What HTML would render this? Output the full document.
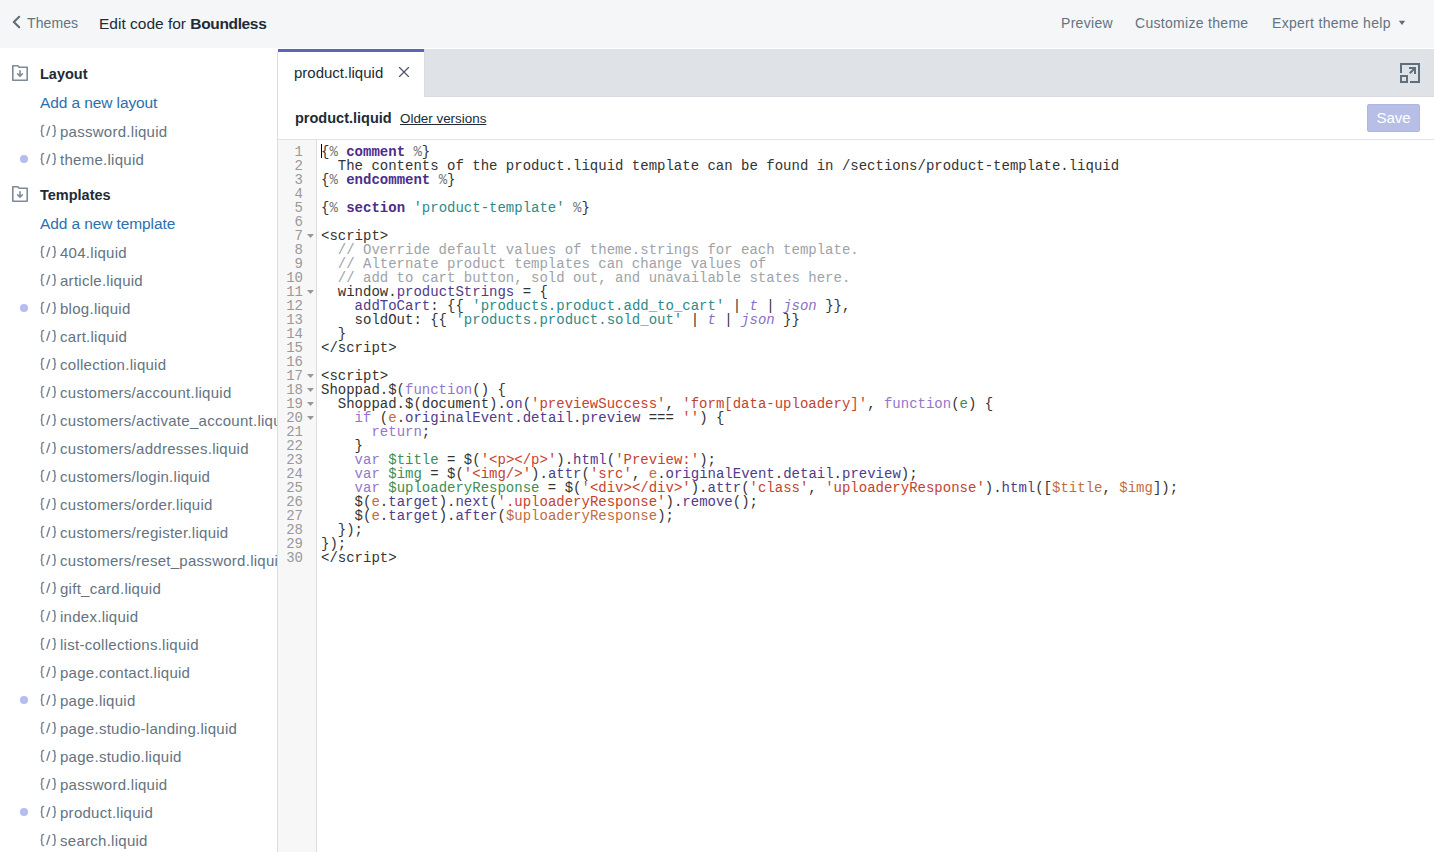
<!DOCTYPE html>
<html><head><meta charset="utf-8"><style>
*{box-sizing:border-box;margin:0;padding:0}
html,body{width:1434px;height:852px;overflow:hidden;background:#fff;font-family:"Liberation Sans",sans-serif;}
.a{position:absolute;white-space:nowrap}
#hdr{position:absolute;left:0;top:0;width:1434px;height:48px;background:#f4f6f8;}
#hdr .t{top:15px;line-height:18px;font-size:15px}
#side{position:absolute;left:0;top:48px;width:277px;height:804px;background:#fff;overflow:hidden}
.row{font-size:15px;line-height:18px}
.h{color:#212b36;font-weight:bold;left:40px;font-size:14.5px}
.lnk{color:#2b70ad;left:40px;letter-spacing:-0.1px;font-size:15.5px}
.f{left:40px;color:#637381;letter-spacing:0.27px}
.br{display:inline-block;width:21px}
.dot{position:absolute;left:20px;width:8px;height:8px;border-radius:50%;background:#b4bcf0}
#main{position:absolute;left:277px;top:48px;width:1157px;height:804px;border-left:1px solid #fff;}
#vb{position:absolute;left:277px;top:52px;width:1px;height:800px;background:#dcdcdc}
#tabs{position:absolute;left:0;top:1px;width:1156px;height:48px;background:#dfe3e8;box-shadow:inset 0 -1px 0 #d8dce1}
#tab{position:absolute;left:0;top:0;width:146px;height:48px;background:#fff;border-top:3px solid #5866b8;box-shadow:1px 0 0 #d8dce1}
#bar{position:absolute;left:0;top:49px;width:1156px;height:43px;background:#fff;border-bottom:1px solid #dfe3e8}
#save{position:absolute;left:1089px;top:7px;width:53px;height:28px;border-radius:3px;background:#b8bfe6;box-shadow:inset 0 0 0 1px #aeb6e2;color:#fff;font-size:15px;line-height:28px;text-align:center}
#gut{position:absolute;left:0;top:92px;width:39px;height:712px;background:#f7f7f7;border-right:1px solid #ddd}
.mono{font-family:"Liberation Mono",monospace;font-size:14px;line-height:14px;white-space:pre}
#code{position:absolute;left:43px;top:97px;color:#333}
#nums{position:absolute;left:0;top:5px;width:25px;text-align:right;color:#999}
.k{color:#4b2d8a;font-weight:bold}.p{color:#777}.s{color:#2e8a8a}.c{color:#9ea3a8}
.pr{color:#503a8a}.kw{color:#9575cd}.v{color:#3e8e50}.st{color:#c4432f}.o{color:#bf6d3d}.it{color:#8a6fc8;font-style:italic}
</style></head><body>
<div id="hdr">
<svg class="a" style="left:12px;top:15px" width="10" height="14" viewBox="0 0 10 14"><polyline points="7.2,1.8 1.8,7 7.2,12.2" fill="none" stroke="#5f6d7b" stroke-width="2.1" stroke-linecap="round" stroke-linejoin="round"/></svg>
<div class="a t" style="left:27px;top:14px;font-size:14px;color:#637381;letter-spacing:0.1px">Themes</div>
<div class="a t" style="left:99px;top:15px;font-size:15.5px;color:#212b36;">Edit code for <b style="letter-spacing:-0.35px">Boundless</b></div>
<div class="a t" style="left:1061px;top:14px;font-size:14px;color:#637381;letter-spacing:0.3px">Preview</div>
<div class="a t" style="left:1135px;top:14px;font-size:14px;color:#637381;letter-spacing:0.3px">Customize theme</div>
<div class="a t" style="left:1272px;top:14px;font-size:14px;color:#637381;letter-spacing:0.3px">Expert theme help</div>
<svg class="a" style="left:1398px;top:20px" width="8" height="6" viewBox="0 0 8 6"><polygon points="0.8,0.8 7.2,0.8 4,5" fill="#5f6d7b"/></svg>
</div>
<div id="side"><div class="a row h" style="top:17px">Layout</div><svg class="a" style="left:12px;top:17px" width="16" height="16" viewBox="0 0 16 16"><path d="M0.8 0.8H5.9L7.1 2.2H15.2V15.2H0.8Z" fill="none" stroke="#7d8a97" stroke-width="1.6" stroke-linejoin="round"/><path d="M8 5.8V11.2M5.6 8.8L8 11.3L10.4 8.8" fill="none" stroke="#7d8a97" stroke-width="1.6" stroke-linecap="round" stroke-linejoin="round"/></svg><div class="a row lnk" style="top:46px">Add a new layout</div><div class="a row f" style="top:75px;left:60px">password.liquid</div><svg class="a" style="left:40px;top:76px" width="17" height="14" viewBox="0 0 17 14"><path d="M3.6 1.5C2.3 1.5 1.8 2.1 1.8 3.2V5.7C1.8 6.5 1.4 6.9 0.7 7C1.4 7.1 1.8 7.5 1.8 8.3V10.8C1.8 11.9 2.3 12.5 3.6 12.5" fill="none" stroke="#7a8794" stroke-width="1.45" stroke-linecap="round"/><path d="M13 1.5C14.3 1.5 14.8 2.1 14.8 3.2V5.7C14.8 6.5 15.2 6.9 15.9 7C15.2 7.1 14.8 7.5 14.8 8.3V10.8C14.8 11.9 14.3 12.5 13 12.5" fill="none" stroke="#7a8794" stroke-width="1.45" stroke-linecap="round"/><path d="M9.6 2.7L6.9 11.2" fill="none" stroke="#7a8794" stroke-width="1.45" stroke-linecap="round"/></svg><div class="a row f" style="top:103px;left:60px">theme.liquid</div><svg class="a" style="left:40px;top:104px" width="17" height="14" viewBox="0 0 17 14"><path d="M3.6 1.5C2.3 1.5 1.8 2.1 1.8 3.2V5.7C1.8 6.5 1.4 6.9 0.7 7C1.4 7.1 1.8 7.5 1.8 8.3V10.8C1.8 11.9 2.3 12.5 3.6 12.5" fill="none" stroke="#7a8794" stroke-width="1.45" stroke-linecap="round"/><path d="M13 1.5C14.3 1.5 14.8 2.1 14.8 3.2V5.7C14.8 6.5 15.2 6.9 15.9 7C15.2 7.1 14.8 7.5 14.8 8.3V10.8C14.8 11.9 14.3 12.5 13 12.5" fill="none" stroke="#7a8794" stroke-width="1.45" stroke-linecap="round"/><path d="M9.6 2.7L6.9 11.2" fill="none" stroke="#7a8794" stroke-width="1.45" stroke-linecap="round"/></svg><div class="dot" style="top:107px"></div><div class="a row h" style="top:138px">Templates</div><svg class="a" style="left:12px;top:138px" width="16" height="16" viewBox="0 0 16 16"><path d="M0.8 0.8H5.9L7.1 2.2H15.2V15.2H0.8Z" fill="none" stroke="#7d8a97" stroke-width="1.6" stroke-linejoin="round"/><path d="M8 5.8V11.2M5.6 8.8L8 11.3L10.4 8.8" fill="none" stroke="#7d8a97" stroke-width="1.6" stroke-linecap="round" stroke-linejoin="round"/></svg><div class="a row lnk" style="top:167px">Add a new template</div><div class="a row f" style="top:196px;left:60px">404.liquid</div><svg class="a" style="left:40px;top:197px" width="17" height="14" viewBox="0 0 17 14"><path d="M3.6 1.5C2.3 1.5 1.8 2.1 1.8 3.2V5.7C1.8 6.5 1.4 6.9 0.7 7C1.4 7.1 1.8 7.5 1.8 8.3V10.8C1.8 11.9 2.3 12.5 3.6 12.5" fill="none" stroke="#7a8794" stroke-width="1.45" stroke-linecap="round"/><path d="M13 1.5C14.3 1.5 14.8 2.1 14.8 3.2V5.7C14.8 6.5 15.2 6.9 15.9 7C15.2 7.1 14.8 7.5 14.8 8.3V10.8C14.8 11.9 14.3 12.5 13 12.5" fill="none" stroke="#7a8794" stroke-width="1.45" stroke-linecap="round"/><path d="M9.6 2.7L6.9 11.2" fill="none" stroke="#7a8794" stroke-width="1.45" stroke-linecap="round"/></svg><div class="a row f" style="top:224px;left:60px">article.liquid</div><svg class="a" style="left:40px;top:225px" width="17" height="14" viewBox="0 0 17 14"><path d="M3.6 1.5C2.3 1.5 1.8 2.1 1.8 3.2V5.7C1.8 6.5 1.4 6.9 0.7 7C1.4 7.1 1.8 7.5 1.8 8.3V10.8C1.8 11.9 2.3 12.5 3.6 12.5" fill="none" stroke="#7a8794" stroke-width="1.45" stroke-linecap="round"/><path d="M13 1.5C14.3 1.5 14.8 2.1 14.8 3.2V5.7C14.8 6.5 15.2 6.9 15.9 7C15.2 7.1 14.8 7.5 14.8 8.3V10.8C14.8 11.9 14.3 12.5 13 12.5" fill="none" stroke="#7a8794" stroke-width="1.45" stroke-linecap="round"/><path d="M9.6 2.7L6.9 11.2" fill="none" stroke="#7a8794" stroke-width="1.45" stroke-linecap="round"/></svg><div class="a row f" style="top:252px;left:60px">blog.liquid</div><svg class="a" style="left:40px;top:253px" width="17" height="14" viewBox="0 0 17 14"><path d="M3.6 1.5C2.3 1.5 1.8 2.1 1.8 3.2V5.7C1.8 6.5 1.4 6.9 0.7 7C1.4 7.1 1.8 7.5 1.8 8.3V10.8C1.8 11.9 2.3 12.5 3.6 12.5" fill="none" stroke="#7a8794" stroke-width="1.45" stroke-linecap="round"/><path d="M13 1.5C14.3 1.5 14.8 2.1 14.8 3.2V5.7C14.8 6.5 15.2 6.9 15.9 7C15.2 7.1 14.8 7.5 14.8 8.3V10.8C14.8 11.9 14.3 12.5 13 12.5" fill="none" stroke="#7a8794" stroke-width="1.45" stroke-linecap="round"/><path d="M9.6 2.7L6.9 11.2" fill="none" stroke="#7a8794" stroke-width="1.45" stroke-linecap="round"/></svg><div class="dot" style="top:256px"></div><div class="a row f" style="top:280px;left:60px">cart.liquid</div><svg class="a" style="left:40px;top:281px" width="17" height="14" viewBox="0 0 17 14"><path d="M3.6 1.5C2.3 1.5 1.8 2.1 1.8 3.2V5.7C1.8 6.5 1.4 6.9 0.7 7C1.4 7.1 1.8 7.5 1.8 8.3V10.8C1.8 11.9 2.3 12.5 3.6 12.5" fill="none" stroke="#7a8794" stroke-width="1.45" stroke-linecap="round"/><path d="M13 1.5C14.3 1.5 14.8 2.1 14.8 3.2V5.7C14.8 6.5 15.2 6.9 15.9 7C15.2 7.1 14.8 7.5 14.8 8.3V10.8C14.8 11.9 14.3 12.5 13 12.5" fill="none" stroke="#7a8794" stroke-width="1.45" stroke-linecap="round"/><path d="M9.6 2.7L6.9 11.2" fill="none" stroke="#7a8794" stroke-width="1.45" stroke-linecap="round"/></svg><div class="a row f" style="top:308px;left:60px">collection.liquid</div><svg class="a" style="left:40px;top:309px" width="17" height="14" viewBox="0 0 17 14"><path d="M3.6 1.5C2.3 1.5 1.8 2.1 1.8 3.2V5.7C1.8 6.5 1.4 6.9 0.7 7C1.4 7.1 1.8 7.5 1.8 8.3V10.8C1.8 11.9 2.3 12.5 3.6 12.5" fill="none" stroke="#7a8794" stroke-width="1.45" stroke-linecap="round"/><path d="M13 1.5C14.3 1.5 14.8 2.1 14.8 3.2V5.7C14.8 6.5 15.2 6.9 15.9 7C15.2 7.1 14.8 7.5 14.8 8.3V10.8C14.8 11.9 14.3 12.5 13 12.5" fill="none" stroke="#7a8794" stroke-width="1.45" stroke-linecap="round"/><path d="M9.6 2.7L6.9 11.2" fill="none" stroke="#7a8794" stroke-width="1.45" stroke-linecap="round"/></svg><div class="a row f" style="top:336px;left:60px">customers/account.liquid</div><svg class="a" style="left:40px;top:337px" width="17" height="14" viewBox="0 0 17 14"><path d="M3.6 1.5C2.3 1.5 1.8 2.1 1.8 3.2V5.7C1.8 6.5 1.4 6.9 0.7 7C1.4 7.1 1.8 7.5 1.8 8.3V10.8C1.8 11.9 2.3 12.5 3.6 12.5" fill="none" stroke="#7a8794" stroke-width="1.45" stroke-linecap="round"/><path d="M13 1.5C14.3 1.5 14.8 2.1 14.8 3.2V5.7C14.8 6.5 15.2 6.9 15.9 7C15.2 7.1 14.8 7.5 14.8 8.3V10.8C14.8 11.9 14.3 12.5 13 12.5" fill="none" stroke="#7a8794" stroke-width="1.45" stroke-linecap="round"/><path d="M9.6 2.7L6.9 11.2" fill="none" stroke="#7a8794" stroke-width="1.45" stroke-linecap="round"/></svg><div class="a row f" style="top:364px;left:60px">customers/activate_account.liquid</div><svg class="a" style="left:40px;top:365px" width="17" height="14" viewBox="0 0 17 14"><path d="M3.6 1.5C2.3 1.5 1.8 2.1 1.8 3.2V5.7C1.8 6.5 1.4 6.9 0.7 7C1.4 7.1 1.8 7.5 1.8 8.3V10.8C1.8 11.9 2.3 12.5 3.6 12.5" fill="none" stroke="#7a8794" stroke-width="1.45" stroke-linecap="round"/><path d="M13 1.5C14.3 1.5 14.8 2.1 14.8 3.2V5.7C14.8 6.5 15.2 6.9 15.9 7C15.2 7.1 14.8 7.5 14.8 8.3V10.8C14.8 11.9 14.3 12.5 13 12.5" fill="none" stroke="#7a8794" stroke-width="1.45" stroke-linecap="round"/><path d="M9.6 2.7L6.9 11.2" fill="none" stroke="#7a8794" stroke-width="1.45" stroke-linecap="round"/></svg><div class="a row f" style="top:392px;left:60px">customers/addresses.liquid</div><svg class="a" style="left:40px;top:393px" width="17" height="14" viewBox="0 0 17 14"><path d="M3.6 1.5C2.3 1.5 1.8 2.1 1.8 3.2V5.7C1.8 6.5 1.4 6.9 0.7 7C1.4 7.1 1.8 7.5 1.8 8.3V10.8C1.8 11.9 2.3 12.5 3.6 12.5" fill="none" stroke="#7a8794" stroke-width="1.45" stroke-linecap="round"/><path d="M13 1.5C14.3 1.5 14.8 2.1 14.8 3.2V5.7C14.8 6.5 15.2 6.9 15.9 7C15.2 7.1 14.8 7.5 14.8 8.3V10.8C14.8 11.9 14.3 12.5 13 12.5" fill="none" stroke="#7a8794" stroke-width="1.45" stroke-linecap="round"/><path d="M9.6 2.7L6.9 11.2" fill="none" stroke="#7a8794" stroke-width="1.45" stroke-linecap="round"/></svg><div class="a row f" style="top:420px;left:60px">customers/login.liquid</div><svg class="a" style="left:40px;top:421px" width="17" height="14" viewBox="0 0 17 14"><path d="M3.6 1.5C2.3 1.5 1.8 2.1 1.8 3.2V5.7C1.8 6.5 1.4 6.9 0.7 7C1.4 7.1 1.8 7.5 1.8 8.3V10.8C1.8 11.9 2.3 12.5 3.6 12.5" fill="none" stroke="#7a8794" stroke-width="1.45" stroke-linecap="round"/><path d="M13 1.5C14.3 1.5 14.8 2.1 14.8 3.2V5.7C14.8 6.5 15.2 6.9 15.9 7C15.2 7.1 14.8 7.5 14.8 8.3V10.8C14.8 11.9 14.3 12.5 13 12.5" fill="none" stroke="#7a8794" stroke-width="1.45" stroke-linecap="round"/><path d="M9.6 2.7L6.9 11.2" fill="none" stroke="#7a8794" stroke-width="1.45" stroke-linecap="round"/></svg><div class="a row f" style="top:448px;left:60px">customers/order.liquid</div><svg class="a" style="left:40px;top:449px" width="17" height="14" viewBox="0 0 17 14"><path d="M3.6 1.5C2.3 1.5 1.8 2.1 1.8 3.2V5.7C1.8 6.5 1.4 6.9 0.7 7C1.4 7.1 1.8 7.5 1.8 8.3V10.8C1.8 11.9 2.3 12.5 3.6 12.5" fill="none" stroke="#7a8794" stroke-width="1.45" stroke-linecap="round"/><path d="M13 1.5C14.3 1.5 14.8 2.1 14.8 3.2V5.7C14.8 6.5 15.2 6.9 15.9 7C15.2 7.1 14.8 7.5 14.8 8.3V10.8C14.8 11.9 14.3 12.5 13 12.5" fill="none" stroke="#7a8794" stroke-width="1.45" stroke-linecap="round"/><path d="M9.6 2.7L6.9 11.2" fill="none" stroke="#7a8794" stroke-width="1.45" stroke-linecap="round"/></svg><div class="a row f" style="top:476px;left:60px">customers/register.liquid</div><svg class="a" style="left:40px;top:477px" width="17" height="14" viewBox="0 0 17 14"><path d="M3.6 1.5C2.3 1.5 1.8 2.1 1.8 3.2V5.7C1.8 6.5 1.4 6.9 0.7 7C1.4 7.1 1.8 7.5 1.8 8.3V10.8C1.8 11.9 2.3 12.5 3.6 12.5" fill="none" stroke="#7a8794" stroke-width="1.45" stroke-linecap="round"/><path d="M13 1.5C14.3 1.5 14.8 2.1 14.8 3.2V5.7C14.8 6.5 15.2 6.9 15.9 7C15.2 7.1 14.8 7.5 14.8 8.3V10.8C14.8 11.9 14.3 12.5 13 12.5" fill="none" stroke="#7a8794" stroke-width="1.45" stroke-linecap="round"/><path d="M9.6 2.7L6.9 11.2" fill="none" stroke="#7a8794" stroke-width="1.45" stroke-linecap="round"/></svg><div class="a row f" style="top:504px;left:60px">customers/reset_password.liquid</div><svg class="a" style="left:40px;top:505px" width="17" height="14" viewBox="0 0 17 14"><path d="M3.6 1.5C2.3 1.5 1.8 2.1 1.8 3.2V5.7C1.8 6.5 1.4 6.9 0.7 7C1.4 7.1 1.8 7.5 1.8 8.3V10.8C1.8 11.9 2.3 12.5 3.6 12.5" fill="none" stroke="#7a8794" stroke-width="1.45" stroke-linecap="round"/><path d="M13 1.5C14.3 1.5 14.8 2.1 14.8 3.2V5.7C14.8 6.5 15.2 6.9 15.9 7C15.2 7.1 14.8 7.5 14.8 8.3V10.8C14.8 11.9 14.3 12.5 13 12.5" fill="none" stroke="#7a8794" stroke-width="1.45" stroke-linecap="round"/><path d="M9.6 2.7L6.9 11.2" fill="none" stroke="#7a8794" stroke-width="1.45" stroke-linecap="round"/></svg><div class="a row f" style="top:532px;left:60px">gift_card.liquid</div><svg class="a" style="left:40px;top:533px" width="17" height="14" viewBox="0 0 17 14"><path d="M3.6 1.5C2.3 1.5 1.8 2.1 1.8 3.2V5.7C1.8 6.5 1.4 6.9 0.7 7C1.4 7.1 1.8 7.5 1.8 8.3V10.8C1.8 11.9 2.3 12.5 3.6 12.5" fill="none" stroke="#7a8794" stroke-width="1.45" stroke-linecap="round"/><path d="M13 1.5C14.3 1.5 14.8 2.1 14.8 3.2V5.7C14.8 6.5 15.2 6.9 15.9 7C15.2 7.1 14.8 7.5 14.8 8.3V10.8C14.8 11.9 14.3 12.5 13 12.5" fill="none" stroke="#7a8794" stroke-width="1.45" stroke-linecap="round"/><path d="M9.6 2.7L6.9 11.2" fill="none" stroke="#7a8794" stroke-width="1.45" stroke-linecap="round"/></svg><div class="a row f" style="top:560px;left:60px">index.liquid</div><svg class="a" style="left:40px;top:561px" width="17" height="14" viewBox="0 0 17 14"><path d="M3.6 1.5C2.3 1.5 1.8 2.1 1.8 3.2V5.7C1.8 6.5 1.4 6.9 0.7 7C1.4 7.1 1.8 7.5 1.8 8.3V10.8C1.8 11.9 2.3 12.5 3.6 12.5" fill="none" stroke="#7a8794" stroke-width="1.45" stroke-linecap="round"/><path d="M13 1.5C14.3 1.5 14.8 2.1 14.8 3.2V5.7C14.8 6.5 15.2 6.9 15.9 7C15.2 7.1 14.8 7.5 14.8 8.3V10.8C14.8 11.9 14.3 12.5 13 12.5" fill="none" stroke="#7a8794" stroke-width="1.45" stroke-linecap="round"/><path d="M9.6 2.7L6.9 11.2" fill="none" stroke="#7a8794" stroke-width="1.45" stroke-linecap="round"/></svg><div class="a row f" style="top:588px;left:60px">list-collections.liquid</div><svg class="a" style="left:40px;top:589px" width="17" height="14" viewBox="0 0 17 14"><path d="M3.6 1.5C2.3 1.5 1.8 2.1 1.8 3.2V5.7C1.8 6.5 1.4 6.9 0.7 7C1.4 7.1 1.8 7.5 1.8 8.3V10.8C1.8 11.9 2.3 12.5 3.6 12.5" fill="none" stroke="#7a8794" stroke-width="1.45" stroke-linecap="round"/><path d="M13 1.5C14.3 1.5 14.8 2.1 14.8 3.2V5.7C14.8 6.5 15.2 6.9 15.9 7C15.2 7.1 14.8 7.5 14.8 8.3V10.8C14.8 11.9 14.3 12.5 13 12.5" fill="none" stroke="#7a8794" stroke-width="1.45" stroke-linecap="round"/><path d="M9.6 2.7L6.9 11.2" fill="none" stroke="#7a8794" stroke-width="1.45" stroke-linecap="round"/></svg><div class="a row f" style="top:616px;left:60px">page.contact.liquid</div><svg class="a" style="left:40px;top:617px" width="17" height="14" viewBox="0 0 17 14"><path d="M3.6 1.5C2.3 1.5 1.8 2.1 1.8 3.2V5.7C1.8 6.5 1.4 6.9 0.7 7C1.4 7.1 1.8 7.5 1.8 8.3V10.8C1.8 11.9 2.3 12.5 3.6 12.5" fill="none" stroke="#7a8794" stroke-width="1.45" stroke-linecap="round"/><path d="M13 1.5C14.3 1.5 14.8 2.1 14.8 3.2V5.7C14.8 6.5 15.2 6.9 15.9 7C15.2 7.1 14.8 7.5 14.8 8.3V10.8C14.8 11.9 14.3 12.5 13 12.5" fill="none" stroke="#7a8794" stroke-width="1.45" stroke-linecap="round"/><path d="M9.6 2.7L6.9 11.2" fill="none" stroke="#7a8794" stroke-width="1.45" stroke-linecap="round"/></svg><div class="a row f" style="top:644px;left:60px">page.liquid</div><svg class="a" style="left:40px;top:645px" width="17" height="14" viewBox="0 0 17 14"><path d="M3.6 1.5C2.3 1.5 1.8 2.1 1.8 3.2V5.7C1.8 6.5 1.4 6.9 0.7 7C1.4 7.1 1.8 7.5 1.8 8.3V10.8C1.8 11.9 2.3 12.5 3.6 12.5" fill="none" stroke="#7a8794" stroke-width="1.45" stroke-linecap="round"/><path d="M13 1.5C14.3 1.5 14.8 2.1 14.8 3.2V5.7C14.8 6.5 15.2 6.9 15.9 7C15.2 7.1 14.8 7.5 14.8 8.3V10.8C14.8 11.9 14.3 12.5 13 12.5" fill="none" stroke="#7a8794" stroke-width="1.45" stroke-linecap="round"/><path d="M9.6 2.7L6.9 11.2" fill="none" stroke="#7a8794" stroke-width="1.45" stroke-linecap="round"/></svg><div class="dot" style="top:648px"></div><div class="a row f" style="top:672px;left:60px">page.studio-landing.liquid</div><svg class="a" style="left:40px;top:673px" width="17" height="14" viewBox="0 0 17 14"><path d="M3.6 1.5C2.3 1.5 1.8 2.1 1.8 3.2V5.7C1.8 6.5 1.4 6.9 0.7 7C1.4 7.1 1.8 7.5 1.8 8.3V10.8C1.8 11.9 2.3 12.5 3.6 12.5" fill="none" stroke="#7a8794" stroke-width="1.45" stroke-linecap="round"/><path d="M13 1.5C14.3 1.5 14.8 2.1 14.8 3.2V5.7C14.8 6.5 15.2 6.9 15.9 7C15.2 7.1 14.8 7.5 14.8 8.3V10.8C14.8 11.9 14.3 12.5 13 12.5" fill="none" stroke="#7a8794" stroke-width="1.45" stroke-linecap="round"/><path d="M9.6 2.7L6.9 11.2" fill="none" stroke="#7a8794" stroke-width="1.45" stroke-linecap="round"/></svg><div class="a row f" style="top:700px;left:60px">page.studio.liquid</div><svg class="a" style="left:40px;top:701px" width="17" height="14" viewBox="0 0 17 14"><path d="M3.6 1.5C2.3 1.5 1.8 2.1 1.8 3.2V5.7C1.8 6.5 1.4 6.9 0.7 7C1.4 7.1 1.8 7.5 1.8 8.3V10.8C1.8 11.9 2.3 12.5 3.6 12.5" fill="none" stroke="#7a8794" stroke-width="1.45" stroke-linecap="round"/><path d="M13 1.5C14.3 1.5 14.8 2.1 14.8 3.2V5.7C14.8 6.5 15.2 6.9 15.9 7C15.2 7.1 14.8 7.5 14.8 8.3V10.8C14.8 11.9 14.3 12.5 13 12.5" fill="none" stroke="#7a8794" stroke-width="1.45" stroke-linecap="round"/><path d="M9.6 2.7L6.9 11.2" fill="none" stroke="#7a8794" stroke-width="1.45" stroke-linecap="round"/></svg><div class="a row f" style="top:728px;left:60px">password.liquid</div><svg class="a" style="left:40px;top:729px" width="17" height="14" viewBox="0 0 17 14"><path d="M3.6 1.5C2.3 1.5 1.8 2.1 1.8 3.2V5.7C1.8 6.5 1.4 6.9 0.7 7C1.4 7.1 1.8 7.5 1.8 8.3V10.8C1.8 11.9 2.3 12.5 3.6 12.5" fill="none" stroke="#7a8794" stroke-width="1.45" stroke-linecap="round"/><path d="M13 1.5C14.3 1.5 14.8 2.1 14.8 3.2V5.7C14.8 6.5 15.2 6.9 15.9 7C15.2 7.1 14.8 7.5 14.8 8.3V10.8C14.8 11.9 14.3 12.5 13 12.5" fill="none" stroke="#7a8794" stroke-width="1.45" stroke-linecap="round"/><path d="M9.6 2.7L6.9 11.2" fill="none" stroke="#7a8794" stroke-width="1.45" stroke-linecap="round"/></svg><div class="a row f" style="top:756px;left:60px">product.liquid</div><svg class="a" style="left:40px;top:757px" width="17" height="14" viewBox="0 0 17 14"><path d="M3.6 1.5C2.3 1.5 1.8 2.1 1.8 3.2V5.7C1.8 6.5 1.4 6.9 0.7 7C1.4 7.1 1.8 7.5 1.8 8.3V10.8C1.8 11.9 2.3 12.5 3.6 12.5" fill="none" stroke="#7a8794" stroke-width="1.45" stroke-linecap="round"/><path d="M13 1.5C14.3 1.5 14.8 2.1 14.8 3.2V5.7C14.8 6.5 15.2 6.9 15.9 7C15.2 7.1 14.8 7.5 14.8 8.3V10.8C14.8 11.9 14.3 12.5 13 12.5" fill="none" stroke="#7a8794" stroke-width="1.45" stroke-linecap="round"/><path d="M9.6 2.7L6.9 11.2" fill="none" stroke="#7a8794" stroke-width="1.45" stroke-linecap="round"/></svg><div class="dot" style="top:760px"></div><div class="a row f" style="top:784px;left:60px">search.liquid</div><svg class="a" style="left:40px;top:785px" width="17" height="14" viewBox="0 0 17 14"><path d="M3.6 1.5C2.3 1.5 1.8 2.1 1.8 3.2V5.7C1.8 6.5 1.4 6.9 0.7 7C1.4 7.1 1.8 7.5 1.8 8.3V10.8C1.8 11.9 2.3 12.5 3.6 12.5" fill="none" stroke="#7a8794" stroke-width="1.45" stroke-linecap="round"/><path d="M13 1.5C14.3 1.5 14.8 2.1 14.8 3.2V5.7C14.8 6.5 15.2 6.9 15.9 7C15.2 7.1 14.8 7.5 14.8 8.3V10.8C14.8 11.9 14.3 12.5 13 12.5" fill="none" stroke="#7a8794" stroke-width="1.45" stroke-linecap="round"/><path d="M9.6 2.7L6.9 11.2" fill="none" stroke="#7a8794" stroke-width="1.45" stroke-linecap="round"/></svg></div>
<div id="main">
<div id="tabs"><svg class="a" style="left:1122px;top:14px" width="20" height="20" viewBox="0 0 20 20" fill="#616e7b"><rect x="0" y="0" width="20" height="2"/><rect x="18" y="0" width="2" height="20"/><rect x="0" y="0" width="2" height="10"/><rect x="10" y="18" width="10" height="2"/><path fill-rule="evenodd" d="M0 12H8V20H0ZM2 14V18H6V14Z"/><rect x="9" y="4" width="7" height="2"/><rect x="14" y="4" width="2" height="7"/><path d="M9.8 10.2L15 5" stroke="#616e7b" stroke-width="2"/></svg><div id="tab"><div class="a" style="left:16px;top:12px;font-size:15px;line-height:18px;color:#212b36">product.liquid</div><svg class="a" style="left:120px;top:14px" width="12" height="12" viewBox="0 0 12 12"><path d="M1.5 1.5L10.5 10.5M10.5 1.5L1.5 10.5" stroke="#4a545f" stroke-width="1.15" stroke-linecap="round"/></svg></div></div>
<div id="bar">
<div class="a" style="left:17px;top:12px;font-size:14.5px;line-height:18px;color:#212b36;font-weight:bold">product.liquid</div>
<div class="a" style="left:122px;top:13px;font-size:13.4px;line-height:18px;color:#212b36;text-decoration:underline">Older versions</div>
<div id="save">Save</div></div>
<div id="gut"><div id="nums" class="mono">1
2
3
4
5
6
7
8
9
10
11
12
13
14
15
16
17
18
19
20
21
22
23
24
25
26
27
28
29
30</div></div>
<svg class="a" style="left:28px;top:185px" width="9" height="6" viewBox="0 0 9 6"><polygon points="1,1 8,1 4.5,5" fill="#999"/></svg><svg class="a" style="left:28px;top:241px" width="9" height="6" viewBox="0 0 9 6"><polygon points="1,1 8,1 4.5,5" fill="#999"/></svg><svg class="a" style="left:28px;top:325px" width="9" height="6" viewBox="0 0 9 6"><polygon points="1,1 8,1 4.5,5" fill="#999"/></svg><svg class="a" style="left:28px;top:339px" width="9" height="6" viewBox="0 0 9 6"><polygon points="1,1 8,1 4.5,5" fill="#999"/></svg><svg class="a" style="left:28px;top:353px" width="9" height="6" viewBox="0 0 9 6"><polygon points="1,1 8,1 4.5,5" fill="#999"/></svg><svg class="a" style="left:28px;top:367px" width="9" height="6" viewBox="0 0 9 6"><polygon points="1,1 8,1 4.5,5" fill="#999"/></svg><div class="a" style="left:43px;top:96px;width:1px;height:14px;background:#000"></div><div id="code" class="mono">{<span class="p">%</span> <span class="k">comment</span> <span class="p">%</span>}
  The contents of the product.liquid template can be found in /sections/product-template.liquid
{<span class="p">%</span> <span class="k">endcomment</span> <span class="p">%</span>}

{<span class="p">%</span> <span class="k">section</span> <span class="s">'product-template'</span> <span class="p">%</span>}

&lt;script&gt;
<span class="c">  // Override default values of theme.strings for each template.</span>
<span class="c">  // Alternate product templates can change values of</span>
<span class="c">  // add to cart button, sold out, and unavailable states here.</span>
  window.<span class="pr">productStrings</span> = {
    <span class="pr">addToCart</span>: {{ <span class="s">'products.product.add_to_cart'</span> | <span class="it">t</span> | <span class="it">json</span> }},
    soldOut: {{ <span class="s">'products.product.sold_out'</span> | <span class="it">t</span> | <span class="it">json</span> }}
  }
&lt;/script&gt;

&lt;script&gt;
Shoppad.$(<span class="kw">function</span>() {
  Shoppad.$(document).<span class="pr">on</span>(<span class="st">'previewSuccess'</span>, <span class="st">'form[data-uploadery]'</span>, <span class="kw">function</span>(<span class="v">e</span>) {
    <span class="kw">if</span> (<span class="o">e</span>.<span class="pr">originalEvent</span>.<span class="pr">detail</span>.<span class="pr">preview</span> === <span class="st">''</span>) {
      <span class="kw">return</span>;
    }
    <span class="kw">var</span> <span class="v">$title</span> = $(<span class="st">'&lt;p&gt;&lt;/p&gt;'</span>).<span class="pr">html</span>(<span class="st">'Preview:'</span>);
    <span class="kw">var</span> <span class="v">$img</span> = $(<span class="st">'&lt;img/&gt;'</span>).<span class="pr">attr</span>(<span class="st">'src'</span>, <span class="o">e</span>.<span class="pr">originalEvent</span>.<span class="pr">detail</span>.<span class="pr">preview</span>);
    <span class="kw">var</span> <span class="v">$uploaderyResponse</span> = $(<span class="st">'&lt;div&gt;&lt;/div&gt;'</span>).<span class="pr">attr</span>(<span class="st">'class'</span>, <span class="st">'uploaderyResponse'</span>).<span class="pr">html</span>([<span class="o">$title</span>, <span class="o">$img</span>]);
    $(<span class="o">e</span>.<span class="pr">target</span>).<span class="pr">next</span>(<span class="st">'.uploaderyResponse'</span>).<span class="pr">remove</span>();
    $(<span class="o">e</span>.<span class="pr">target</span>).<span class="pr">after</span>(<span class="o">$uploaderyResponse</span>);
  });
});
&lt;/script&gt;</div>
</div>
<div id="vb"></div>
</body></html>
